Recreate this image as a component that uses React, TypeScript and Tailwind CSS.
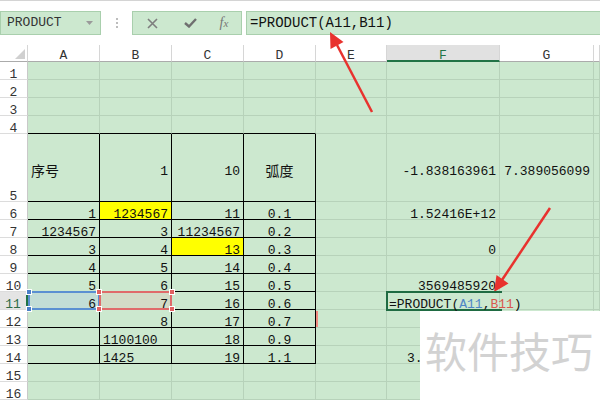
import React from 'react';

/**
 * Spreadsheet view: formula bar, grid with the PRODUCT formula being edited,
 * two red annotation arrows and a watermark in the corner.
 */

type Cell = {
  t: React.ReactNode;
  a?: 'l' | 'r' | 'c';
  bg?: string;
  cjk?: boolean;
  pad?: string;
};

const COLS = ['A', 'B', 'C', 'D', 'E', 'F', 'G', 'H'];
const ROWS = Array.from({ length: 16 }, (_, i) => i + 1);

const mono = { fontFamily: '"Liberation Mono", "Noto Sans CJK SC", monospace' };
const cjk = { fontFamily: '"Noto Sans CJK SC", "Noto Sans", sans-serif' };

// cell contents, keyed by address
const data: Record<string, Cell> = {
  A5: { t: '序号', a: 'l', cjk: true },
  B5: { t: '1' },
  C5: { t: '10' },
  D5: { t: '弧度', a: 'c', cjk: true },
  F5: { t: '-1.838163961' },
  G5: { t: '7.389056099' },
  A6: { t: '1' },
  B6: { t: '1234567', bg: 'bg-[#ffff00]' },
  C6: { t: '11' },
  D6: { t: '0.1', a: 'c' },
  F6: { t: '1.52416E+12' },
  A7: { t: '1234567' },
  B7: { t: '3' },
  C7: { t: '11234567' },
  D7: { t: '0.2', a: 'c' },
  A8: { t: '3' },
  B8: { t: '4' },
  C8: { t: '13', bg: 'bg-[#ffff00]' },
  D8: { t: '0.3', a: 'c' },
  F8: { t: '0' },
  A9: { t: '4' },
  B9: { t: '5' },
  C9: { t: '14' },
  D9: { t: '0.4', a: 'c' },
  A10: { t: '5' },
  B10: { t: '6' },
  C10: { t: '15' },
  D10: { t: '0.5', a: 'c' },
  F10: { t: '3569485920' },
  A11: { t: '6', bg: 'bg-[#c2ddd6]' },
  B11: { t: '7', bg: 'bg-[#d3dbc6]' },
  C11: { t: '16' },
  D11: { t: '0.6', a: 'c' },
  B12: { t: '8' },
  C12: { t: '17' },
  D12: { t: '0.7', a: 'c' },
  B13: { t: '1100100', a: 'l' },
  C13: { t: '18' },
  D13: { t: '0.9', a: 'c' },
  B14: { t: '1425', a: 'l' },
  C14: { t: '19' },
  D14: { t: '1.1', a: 'c' },
  // only the start of this value shows; the watermark covers the rest
  F14: { t: '3.', a: 'l', pad: 'pl-[20px]' },
};

// small square selection handle
const Handle = ({ pos, color }: { pos: string; color: string }) => (
  <span className={`absolute w-[6px] h-[6px] border border-white ${color} ${pos}`} />
);

const FormulaBar = () => (
  <div className="h-[45px] border-t border-[#d4d4d4] bg-white flex items-start pt-[10px]">
    {/* name box */}
    <div className="w-[101px] h-[24px] border border-[#a9cfad] bg-[#cce8cf] flex items-center justify-between pl-[6px] pr-[7px]">
      <span className="text-[13px] text-[#333]" style={mono}>PRODUCT</span>
      <svg width="7" height="4" viewBox="0 0 7 4">
        <path d="M0 0 L7 0 L3.5 4 Z" fill="#9a9a9a" />
      </svg>
    </div>

    {/* separator dots */}
    <div className="w-[31px] h-[24px] flex flex-col items-center justify-center gap-[2px]">
      <span className="w-[2px] h-[2px] bg-[#bdbdbd]" />
      <span className="w-[2px] h-[2px] bg-[#bdbdbd]" />
      <span className="w-[2px] h-[2px] bg-[#bdbdbd]" />
    </div>

    {/* cancel / enter / fx */}
    <div className="w-[110px] h-[24px] border border-[#a9cfad] bg-[#cce8cf] flex items-center">
      <div className="w-[38px] flex justify-center">
        <svg width="11" height="11" viewBox="0 0 11 11">
          <path d="M1 1 L10 10 M10 1 L1 10" stroke="#7e7e7e" strokeWidth="1.6" />
        </svg>
      </div>
      <div className="w-[38px] flex justify-center">
        <svg width="13" height="10" viewBox="0 0 13 10">
          <path d="M1 5 L5 8.5 L12 1" stroke="#6f6f6f" strokeWidth="2.4" fill="none" />
        </svg>
      </div>
      <div className="w-[30px] flex justify-center">
        <span
          className="italic text-[14px] text-[#777] leading-none"
          style={{ fontFamily: '"Liberation Serif", serif' }}
        >
          f<span className="text-[11px]">x</span>
        </span>
      </div>
    </div>

    {/* formula input */}
    <div className="ml-[4px] flex-1 h-[24px] border border-r-0 border-[#a9cfad] bg-[#cce8cf] flex items-center pl-[3px]">
      <span className="text-[14px] text-[#111]" style={mono}>=PRODUCT(A11,B11)</span>
    </div>
  </div>
);

const Sheet = () => {
  const cells: React.ReactNode[] = [];

  // header row
  cells.push(
    <div key="corner" className="relative bg-white border-r border-b border-r-[#d6d6d6] border-b-[#ababab]">
      <svg className="absolute right-[2px] bottom-[2px]" width="10" height="10" viewBox="0 0 10 10">
        <path d="M10 0 L10 10 L0 10 Z" fill="#d0d0d0" />
      </svg>
    </div>
  );
  COLS.forEach((c) => {
    const active = c === 'F';
    cells.push(
      <div
        key={`h${c}`}
        className={`flex justify-center pt-[4px] text-[13px] leading-[13px] border-r border-r-[#d6d6d6] ${
          active
            ? 'bg-[#e1e1e1] text-[#217346] border-b-2 border-b-[#217346]'
            : 'bg-white text-[#333] border-b border-b-[#ababab]'
        }`}
        style={mono}
      >
        {c === 'H' ? '' : c}
      </div>
    );
  });

  ROWS.forEach((r) => {
    const rowPad = r === 5 ? 'pt-[56px]' : 'pt-[6px]';
    const activeRow = r === 11;
    cells.push(
      <div
        key={`r${r}`}
        className={`flex justify-center text-[13px] leading-[13px] border-b border-b-[#dcdcdc] ${rowPad} ${
          activeRow
            ? 'bg-[#e4e4e4] text-[#2f6b47] border-r-2 border-r-[#217346]'
            : 'bg-white text-[#333] border-r border-r-[#c9c9c9]'
        }`}
        style={mono}
      >
        {r}
      </div>
    );

    COLS.forEach((c, ci) => {
      const key = `${c}${r}`;
      const d = data[key];
      const inTable = ci <= 3;
      const rightBlack = inTable && r >= 5 && r <= 14;
      const bottomBlack = inTable && r >= 4 && r <= 14;
      const align =
        d?.a === 'l'
          ? `justify-start ${d.pad ?? 'pl-[3px]'}`
          : d?.a === 'c'
            ? 'justify-center'
            : 'justify-end pr-[3px]';
      const pad = r === 5 ? (d?.cjk ? 'pt-[30px]' : 'pt-[31px]') : 'pt-[6px]';
      const size = d?.cjk ? 'text-[14px]' : 'text-[13px]';

      if (key === 'F11') {
        // cell being edited: formula overflows to the right
        cells.push(
          <div
            key={key}
            className="relative z-10 flex justify-start pl-[2px] pt-[6px] text-[13px] leading-[13px] whitespace-nowrap text-[#111] bg-[#cce8cf] border-r border-b border-r-[#b7d2ba] border-b-[#b7d2ba]"
            style={mono}
          >
            <span className="absolute -left-px -top-px -right-[3px] -bottom-[2px] border-2 border-r-0 border-[#1f6b42]" />
            <span className="relative">
              =PRODUCT(<span className="text-[#4f86c6]">A11</span>,<span className="text-[#d9574e]">B11</span>)
            </span>
          </div>
        );
        return;
      }

      cells.push(
        <div
          key={key}
          className={`flex ${align} ${pad} ${size} leading-[13px] whitespace-nowrap text-[#111] border-r border-b ${
            d?.bg ?? 'bg-[#cce8cf]'
          } ${rightBlack ? 'border-r-black' : 'border-r-[#b7d2ba]'} ${
            bottomBlack ? 'border-b-black' : 'border-b-[#b7d2ba]'
          } ${key === 'A11' || key === 'B11' ? 'relative' : ''}`}
          style={d?.cjk ? cjk : mono}
        >
          {d?.t}
          {key === 'A11' && (
            <>
              <span className="absolute left-0 -top-px -right-px -bottom-px border-2 border-[#5a8fd2]" />
              <Handle pos="-left-[2px] -top-[3px]" color="bg-[#4a7fc8]" />
              <Handle pos="-left-[2px] -bottom-[3px]" color="bg-[#4a7fc8]" />
            </>
          )}
          {key === 'B11' && (
            <>
              <span className="absolute -left-px -top-px -right-px -bottom-px border-2 border-[#e06a6a]" />
              <Handle pos="-left-[4px] -top-[3px]" color="bg-[#e06262]" />
              <Handle pos="-left-[4px] -bottom-[3px]" color="bg-[#e06262]" />
              <Handle pos="-right-[4px] -top-[3px]" color="bg-[#e06262]" />
              <Handle pos="-right-[4px] -bottom-[3px]" color="bg-[#e06262]" />
            </>
          )}
        </div>
      );
    });
  });

  return (
    <div className="grid grid-cols-[28px_72px_72px_72px_72px_71px_113px_94px_1fr] grid-rows-[17px_repeat(4,18px)_68px_repeat(11,18px)]">
      {cells}
    </div>
  );
};

const Arrows = () => (
  <svg className="absolute inset-0 pointer-events-none" width="600" height="400" viewBox="0 0 600 400">
    <path d="M372 112 L337 45" stroke="#e8322e" strokeWidth="2.5" />
    <polygon points="330,32 343.5,42 330.5,49" fill="#e8322e" />
    <path d="M550 208 L502 280" stroke="#e8322e" strokeWidth="2.5" />
    <polygon points="494,292 508.5,283.5 496.5,275" fill="#e8322e" />
  </svg>
);

export default function App() {
  return (
    <div className="relative w-[600px] h-[400px] overflow-hidden bg-white">
      <FormulaBar />
      <Sheet />

      {/* red mark at the edge of D12 */}
      <div className="absolute left-[316px] top-[311px] w-[2px] h-[16px] bg-[#f08a80]" />

      <Arrows />

      {/* watermark */}
      <div className="absolute left-[420px] top-[311px] w-[180px] h-[89px] bg-white pl-[5px] pt-[18px]">
        <span className="text-[42px] leading-none text-[#d2d2d2] whitespace-nowrap" style={cjk}>
          软件技巧
        </span>
      </div>
    </div>
  );
}
